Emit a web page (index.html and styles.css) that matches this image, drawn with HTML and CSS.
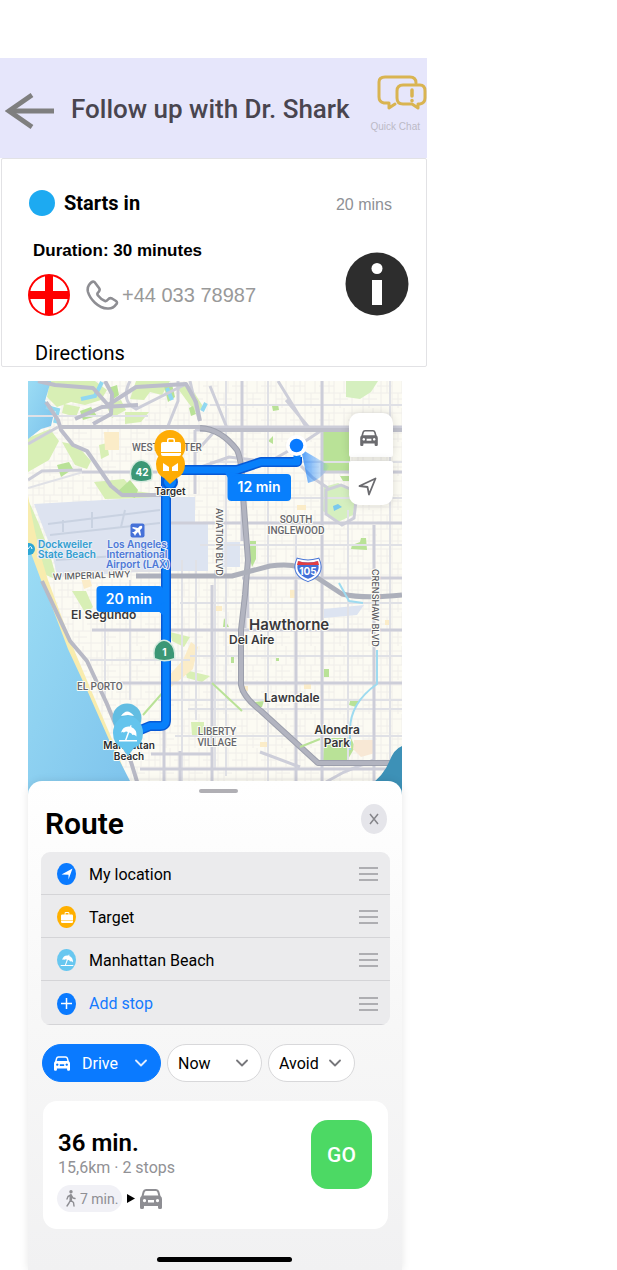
FILE: index.html
```html
<!DOCTYPE html>
<html lang="en">
<head>
<meta charset="utf-8">
<meta name="viewport" content="width=device-width, initial-scale=1">
<title>Follow up with Dr. Shark</title>
<link rel="stylesheet" href="styles.css">
</head>
<body>
<svg class="defs" aria-hidden="true">
  <symbol id="car" viewBox="0 0 22 20"><path fill-rule="evenodd" d="M6 0h10q2.600 0 3.300 2.500L20.500 7q1.500 1 1.500 3v8.500q0 1.500-1.500 1.500h-1q-1.500 0-1.500-1.500V17H4v1.500Q4 20 2.500 20h-1Q0 20 0 18.500V10q0-2 1.500-3l1.200-4.500Q3.400 0 6 0zM6.300 2Q5 2 4.600 3.200L3.700 6.500h14.600l-.9-3.300Q17 2 15.700 2zM4.500 10a1.600 1.600 0 1 0 .01 0zM17.500 10a1.600 1.600 0 1 0 .01 0zM8 11v2.500h6V11z"/></symbol>
  <symbol id="case" viewBox="0 0 20 18"><path fill-rule="evenodd" d="M6 4V2q0-2 2-2h4q2 0 2 2v2h4q2 0 2 2v8H0V6q0-2 2-2zM7.500 4h5V2.500q0-1-1-1h-3q-1 0-1 1zM0 15h20v1q0 2-2 2H2q-2 0-2-2z"/></symbol>
  <symbol id="beach" viewBox="0 0 20 18"><path d="M3 8Q5 1 12 2l.6-1.500 1 .4-.4 1.600q6 2.500 5.300 9.500-2-2.500-4-1.500-1-2.500-3.200-2.500L8.500 15.500H19V17H1v-1.500h6L9.800 7.500Q8 6.500 6 8 4.500 7 3 8z"/></symbol>
  <symbol id="chev" viewBox="0 0 12 8"><path d="M1 1.500l5 5 5-5" fill="none" stroke="currentColor" stroke-width="1.800" stroke-linecap="round" stroke-linejoin="round"/></symbol>
</svg>
<main class="screen">
  <header class="topbar">
    <button class="back" aria-label="Back"><svg width="50" height="36" viewBox="0 0 50 36" fill="none" stroke="#7f7f7f" stroke-width="4.800"><path d="M4 18h45"/><path d="M27 2L4 18l23 16"/></svg></button>
    <h1 class="topbar-title">Follow up with Dr. Shark</h1>
    <button class="chat">
      <svg width="51" height="36" viewBox="0 0 51 36" fill="none" stroke="#d9b451" stroke-width="3" stroke-linejoin="round" stroke-linecap="round"><path d="M19 29l-6 4v-5H8q-5-1-5-6V7q0-5 6-5h25q6 0 6 6"/><path d="M27 10h17q5 0 5 6v7q0 5-5 6h-2v4l-6-4h-9q-6 0-6-6v-7q0-6 6-6z"/><path d="M36 15v6M36 25.500v.2" stroke-width="3.500"/></svg>
      <span>Quick Chat</span>
    </button>
  </header>

  <section class="details">
    <div class="starts"><i class="dot"></i><strong>Starts in</strong><span class="when">20 mins</span></div>
    <div class="info-row">
      <div>
        <p class="duration">Duration: 30 minutes</p>
        <div class="contact">
          <svg width="42" height="42" viewBox="0 0 42 42" stroke="#f00" fill="none"><circle cx="21" cy="21" r="20" stroke-width="2"/><path d="M21 1v40M1 21h40" stroke-width="8"/></svg>
          <a class="phone" href="tel:+4403378987"><svg width="33" height="31" viewBox="0 0 33 31" fill="none" stroke="#8e8e93" stroke-width="2.600" stroke-linejoin="round"><path d="M3 5Q6 .5 8.500 2L13 8q1.500 2-.5 4-2 1.500-.5 3.500 3 4 7 5.500 1.500.5 3-1.500t4-1l4 2.500q2 1.500 0 3.500-3 4.500-8.500 4C12 28 4 19 2 12Q1 8 3 5z"/></svg>+44 033 78987</a>
        </div>
      </div>
      <button class="info" aria-label="Appointment information"><svg width="64" height="64" viewBox="0 0 64 64"><circle cx="32" cy="32" r="31.500" fill="#2d2d2d"/><circle cx="32" cy="16.500" r="5.500" fill="#fff"/><path d="M27 28h10v25H27z" fill="#fff"/></svg></button>
    </div>
    <h2 class="directions">Directions</h2>
  </section>

  <section class="navigator">
    <div class="map">
      <svg class="map-art" viewBox="28 381 374 420" role="img" aria-label="Route map">
        <defs>
          <pattern id="blocks" width="29" height="34" patternUnits="userSpaceOnUse"><path d="M0 5h29M0 12h15M0 19h29M15 25h14M0 31h29M4 0v34M10 5v14M15 0v34M21 19v15M25 0v19" stroke="#f0eeea" fill="none"/></pattern>
          <linearGradient id="sea" x1="0" y1="0" x2="1" y2="1"><stop stop-color="#9bdcf4"/><stop offset="1" stop-color="#7cc2ec"/></linearGradient>
          <linearGradient id="beam"><stop stop-color="#087aff" stop-opacity=".7"/><stop offset="1" stop-color="#087aff" stop-opacity="0"/></linearGradient>
        </defs>
        <path d="M28 381h374v420H28z" fill="#fcfbf3"/>
        <path d="M28 381h374v420H28z" fill="url(#blocks)"/>
        <g fill="#d8efb5">
          <path d="M50 381h45l12 9-6 10-16 5-14-3-14 5-10-10zM64 404l16 3-4 10-14-4zM28 438l22-9 9 12-10 19-21 12zM62 442l15 3 14 16-4 8-12-4zM99 445l8-2 2 12-8 4zM136 381h34l-8 14-12-3-6 8-14-1zM106 405l15-5 5 10-14 8zM125 412h24l-8 10-16 2zM94 482l30-3 10 12 25 3v4l-54 1zM176 386h14l14 22-9 4z"/>
          <path d="M28 500q10 20 17 40t12 40l-13-6-16-42zM72 591h14l7 16-7 7zM170 632l20 5-6 10-12-6zM185 670l25 6-8 6-15-4zM191 722h13v13h-12z"/>
        </g>
        <g fill="#b9e297"><path d="M80 411l11-4 6 9-14 4zM108 388l9-3 2 10-7 5zM57 465l12-3 4 7-12 8zM164 386l8-2 3 13-7 5zM130 480l8 10-3 8-18-6zM323 431h27v42h-11l-16-2zM340 476h21v5h-18zM352 545l8-3 1-4h5l1 12-16-1zM250 541h6v18l-4 8-2-8zM324 738h27l4 9-8 14h-24zM350 701l9-1-3 7-7-2zM254 702l10-1-2 6h-8zM189 408l4-2 3 8-5 2zM272 406l6-2 1 6-6 1zM268 441l5-5v8zM224 618l5 9h-6zM231 657h3v6h-3zM276 658h3v3h-3zM324 669h5v8h-5z"/></g>
        <path d="M324 487l14-4 18 8-3 24-15 7-15-11z" fill="#d5efbf"/>
        <path d="M333 506l5-2 4 3-8 4z" fill="#79c9ed"/>
        <path d="M346 381h32l-7 11-11 7-14-2z" fill="#d5efbf"/>
        <path d="M354 740h19l2 13-14 4-8-8z" fill="#f8e8d5"/>
        <path d="M165 680l18-20 8-18 7 5-5 22-22 18zM104 432h15v18h-14zM163 550h20v8h-20zM81 578l8-2 3 10-8 3z" fill="#fbecc8"/>
        <g fill="#fbecc8"><path d="M297 505h9v5h-9zM214 606h8v5h-8zM290 590h5v8h-5zM240 686h8v5h-8zM385 620h6v5h-6zM260 742h9v5h-9zM304 682h7v7h-7z"/></g>
        <path d="M34 504l121-7h15v73l-113 7-5-26z" fill="#dde3f0"/>
        <path d="M170 497h25v25h-25zM170 523h38v48h-38zM222 542h18v25h-18zM324 609l40-4-7 10-33 3z" fill="#dde4f1"/>
        <g stroke="#c9d2e1" stroke-width="2" fill="none"><path d="M48 524l112-14M50 535l110-12M56 560l105-7M63 520v12M92 512v16M125 510l-4 17"/></g>

        <path d="M28 381h23l-6 20 10 8-4 17-10 3-13 10z" fill="url(#sea)"/>
        <path d="M46 407l12 3-3 13M102 382l-7 14-14 3M167 388l5 12M206 403l-4 8" stroke="#91d8f1" stroke-width="4" fill="none"/>
        <path d="M28 495q8 48 20 85l24 65 19 45 21 49 24 62H28z" fill="#f8ecae"/>
        <path d="M28 545l13 35 10 24 17 45 19 41 23 52 20 39 10 20H28z" fill="url(#sea)"/>
        <g stroke="#e0e1e6" stroke-width="2" fill="none">
          <path d="M28 416h120M210 405h192M210 462h192M240 498h162M200 545h202M180 603h222M190 656h212M188 709h214M175 736h227M28 488l55-16h120M65 571h96M90 660h100M158 700h245M268 381v400M296 520v261M226 381v395M348 510v250M390 381v400M215 570v200M182 560v240M105 590v110M130 580v120M196 560v160"/>
        </g>
        <g stroke="#cdced9" stroke-width="3" fill="none">
          <path d="M62 427h340M195 430h207M323 472h79M161 523h241M242 578h160M92 630h310M118 683h284M140 769h262M151 754h60M242 381v160M322 381v400M374 525v256M296 580v201M212 585v196M164 700v95M180 751v30M178 381v20l-10 25M82 472h75M28 480l14-9 40-1M195 430v64M196 452l18-20M245 578v50"/>
          <path d="M286 400l25 30M278 381l30 49M210 386l17 42M190 381l9 39M130 381q-10 20 6 28l50-25M28 444l30-17M322 430l-18 12-35 20-40-5-28 10M246 518l2 100M374 760l-30 12-18 10M300 767l-40-15M328 488l-15-10-12-12M342 525l-16-11v-24l15-5 16 7-3 26z"/>
        </g>
        <g fill="none" stroke-linejoin="round">
          <path d="M46 402l12 18 3 10 12 15 14 6 24 35 11 9h45M38 381l17 4 38 3 15 17 28-18 50-3 10 18 4 19M105 381l7 13-1 20-18 10M75 419l27-12 36-2" stroke="#bcbdcb" stroke-width="4"/>
          <path d="M60 427h140M200 430h202" stroke="#bfc0cb" stroke-width="4"/>
          <path d="M200 428q21 1 37 22 5 10 6 45l5 65-3 35-4 35v55q2 12 20 26l57 52h84" stroke="#9c9fac" stroke-width="6"/>
          <path d="M200 428q21 1 37 22 5 10 6 45l5 65-3 35-4 35v55q2 12 20 26l57 52h84" stroke="#b2b4c0" stroke-width="4"/>
          <path d="M136 576h96l38-10q28-4 40 7l32 21q22 5 60 1" stroke="#adb0bb" stroke-width="5"/>
          <path d="M42 581l28 60 17 20 20 43 24 58 12 39" stroke="#b8b9c5" stroke-width="4"/>
          <path d="M377 650v34q-27 19-27 46v20M339 583l10 18 14 2" stroke="#9edbf0" stroke-width="2"/>
          <path d="M212 683l30 28M300 747l20-8M143 715l22-25" stroke="#b9e297" stroke-width="2"/>
        </g>
        <path d="M402 746q-8 3-13 16t-20 24v15h33z" fill="#3d91b7"/>

        <g class="area-label"><text x="132" y="451">WESTCHESTER</text><text x="296" y="523" text-anchor="middle">SOUTH</text><text x="296" y="534" text-anchor="middle">INGLEWOOD</text><text x="77" y="690">EL PORTO</text><text x="217" y="735" text-anchor="middle">LIBERTY</text><text x="217" y="746" text-anchor="middle">VILLAGE</text></g>
        <g class="road-label"><text x="53" y="580" transform="rotate(-2 53 580)">W IMPERIAL HWY</text><text transform="translate(216 508) rotate(90)">AVIATION BLVD</text><text transform="translate(372 569) rotate(90)">CRENSHAW BLVD</text></g>
        <g class="place-label"><text class="city" x="249" y="630">Hawthorne</text><text x="229" y="644">Del Aire</text><text x="264" y="702">Lawndale</text><text x="337" y="734" text-anchor="middle">Alondra</text><text x="337" y="747" text-anchor="middle">Park</text><text class="segundo" x="71" y="619">El Segundo</text></g>

        <g fill="none" stroke-linejoin="round"><path d="M297 457v5H261l-24 8H166V720q0 6-6 6h-10l-12 5" stroke="#0759d5" stroke-width="10"/><path d="M297 454v8H261l-24 8H166V720q0 6-6 6h-10l-12 5" stroke="#0880fb" stroke-width="7"/></g>
        <circle cx="170" cy="482" r="8" fill="#0759d5"/><circle cx="170" cy="482" r="6" fill="#0880fb"/>
        <g class="poi-label"><text class="sea-label" x="38" y="548">Dockweiler</text><text class="sea-label" x="38" y="558">State Beach</text><text x="137" y="548" text-anchor="middle">Los Angeles</text><text x="137" y="558" text-anchor="middle">International</text><text x="138" y="568" text-anchor="middle">Airport (LAX)</text></g>
        <circle cx="29" cy="549" r="6" fill="#2da6d5"/><path d="M28 549q3-5 4 0" stroke="#fff" fill="none"/>
        <path d="M301 449l29 17q-10 15-22 17z" fill="url(#beam)"/>
        <circle cx="296.500" cy="445.500" r="10.500" fill="#fff"/><circle cx="296.500" cy="445.500" r="6.800" fill="#087aff"/>
        <g fill="#087ffc"><rect x="227.500" y="474" width="63.500" height="27" rx="4"/><path d="M224 471l8 14v-8l8-3z"/><rect x="96.500" y="586" width="66.500" height="26" rx="4"/><path d="M155 608l10 9v-15z"/></g>
        <g class="time-label"><text x="259" y="492">12 min</text><text x="129" y="604">20 min</text></g>

        <g><path d="M136 463q5-4 11 0 6 5 4 16-10 4-19 0-3-10 4-16z" fill="#328c6b" stroke="#d7eadf" stroke-width="3"/><path d="M136 463q5-4 11 0 6 5 4 16-10 4-19 0-3-10 4-16z" fill="#3b9775"/><path d="M159 643q5-4 10 0 6 5 5 15-10 4-19 0-2-10 4-15z" fill="#328c6b" stroke="#d7eadf" stroke-width="3"/><path d="M159 643q5-4 10 0 6 5 5 15-10 4-19 0-2-10 4-15z" fill="#3b9775"/></g>
        <path d="M298 560q10 3 20 0 6 14-10 20-16-6-10-20z" fill="#416fd8" stroke="#4976d6" stroke-width="4"/><path d="M298 560q10 3 20 0 6 14-10 20-16-6-10-20z" fill="#416fd8" stroke="#fff" stroke-width="2"/>
        <path d="M298 561q10 3 20 0l1 4h-22z" fill="#e23e43"/>
        <g class="shield-label"><text x="142" y="476">42</text><text x="164.500" y="656">1</text><text x="308" y="575">105</text></g>
        <rect x="130.500" y="523.500" width="14" height="14" rx="2" fill="#4671d8"/><path d="M142 526q-2-1-4 2l-5-1-1 1 4 2-2 2-2 0 2 2 1 2 1-2 2-2 2 4 1-1-1-5q3-2 2-4z" fill="#fff"/>

        <g class="stop-label"><text x="170" y="495">Target</text><text x="129" y="749">Manhattan</text><text x="129" y="760">Beach</text></g>
        <path d="M156 464a14 13 0 0 1 29 0q0 10-8 14l-7 6-6-6q-8-4-8-14z" fill="#feac05"/><path d="M163 463l6 4v4h-6zM178 463l-6 4v4h6z" fill="#fff"/>
        <ellipse cx="170" cy="446" rx="15.500" ry="16" fill="#feac05"/><use href="#case" x="161" y="438" width="20" height="18" fill="#fff"/>
        <circle cx="127" cy="718" r="14.500" fill="#62bde2"/><path d="M121 716q6-9 13 0l-6-1z" fill="#fff"/>
        <path d="M113 733a15 17 0 0 1 30 0q0 12-9 15l-6 8-6-8q-9-4-9-15z" fill="#64c4ed"/><use href="#beach" x="118" y="724" width="20" height="19" fill="#fff"/>
      </svg>
      <div class="map-tools">
        <button aria-label="Driving map"><svg width="18" height="16"><use href="#car" width="18" height="16"/></svg></button>
        <button aria-label="Current location"><svg width="19" height="19" viewBox="0 0 19 19" fill="none" stroke="#6b6b6f" stroke-width="1.800" stroke-linejoin="round"><path d="M17.500 1.500L11 17.500l-1.500-7.500L1.500 9z"/></svg></button>
      </div>
    </div>

    <div class="sheet">
      <div class="grabber"></div>
      <div class="sheet-head"><h2>Route</h2><button class="close" aria-label="Close"><svg width="10" height="12" viewBox="0 0 10 12" stroke="#85858a" stroke-width="1.500"><path d="M1 1l8 10M9 1L1 11"/></svg></button></div>
      <ul class="stops">
        <li><span class="badge blue"><svg width="12" height="12" viewBox="0 0 12 12"><path d="M11.500.5L7.500 11.500V6.800L.5 6.500z"/></svg></span><span>My location</span><button class="drag" aria-label="Reorder My location"></button></li>
        <li><span class="badge orange"><svg width="12" height="11"><use href="#case" width="12" height="11"/></svg></span><span>Target</span><button class="drag" aria-label="Reorder Target"></button></li>
        <li><span class="badge sky"><svg width="14" height="13"><use href="#beach" width="14" height="13"/></svg></span><span>Manhattan Beach</span><button class="drag" aria-label="Reorder Manhattan Beach"></button></li>
        <li><span class="badge blue"><svg width="11" height="11" viewBox="0 0 11 11" stroke="#fff" stroke-width="1.500"><path d="M5.500 0v11M0 5.500h11"/></svg></span><button class="add">Add stop</button><button class="drag" aria-label="Reorder new stop"></button></li>
      </ul>
      <div class="chips">
        <label class="chip drive"><svg width="16" height="15"><use href="#car" width="16" height="15"/></svg><select aria-label="Travel mode"><option>Drive</option></select><svg width="12" height="8"><use href="#chev"/></svg></label>
        <label class="chip now"><select aria-label="Departure"><option>Now</option></select><svg width="12" height="8"><use href="#chev"/></svg></label>
        <label class="chip avoid"><select aria-label="Avoid"><option>Avoid</option></select><svg width="12" height="8"><use href="#chev"/></svg></label>
      </div>
      <article class="trip">
        <div class="trip-info">
          <h3>36 min.</h3>
          <p>15,6km · 2 stops</p>
          <div class="legs"><span class="walk"><svg width="10" height="17" viewBox="0 0 10 17" fill="none" stroke="#8e8e93" stroke-width="1.400" stroke-linecap="round" stroke-linejoin="round"><circle cx="5" cy="1.800" r="1" fill="#8e8e93"/><path d="M5 5L4.500 10l3 2.500.5 3.500M4.500 10L3 13l-2 3M1 9l1-2.500L5 5l2 3 2 .5"/><path d="M4.800 5.500v4" stroke-width="2.500"/></svg>7 min.</span><svg width="8" height="9" viewBox="0 0 8 9"><path d="M0 0l8 4.500L0 9z"/></svg><svg class="leg-car" width="22" height="20"><use href="#car" width="22" height="20"/></svg></div>
        </div>
        <button class="go">GO</button>
      </article>
      <div class="home-bar"></div>
    </div>
  </section>
</main>
</body>
</html>
```
FILE: styles.css
```css
* { box-sizing: border-box; }
body { margin: 0; background: #fff; color: #000; font-family: Roboto, sans-serif; }
button, select { font: inherit; color: inherit; border: 0; padding: 0; margin: 0; background: none; }
h1, h2, h3, p, ul { margin: 0; padding: 0; }
svg { display: block; flex: none; }
.defs { position: absolute; width: 0; height: 0; }
.screen { width: 100%; max-width: 427px; padding-top: 58px; }

.topbar { display: flex; align-items: center; height: 100px; padding-left: 5px; background: #e6e6fb; }
.back { margin-top: 6px; }
.topbar-title { flex: 1; padding: 2px 0 0 16px; font-size: 26px; font-weight: 500; line-height: 32px; color: #49454f; white-space: nowrap; }
.chat { display: flex; flex-direction: column; align-items: flex-end; align-self: flex-start; gap: 10px; padding-top: 17px; font: 10px/12px "Liberation Sans", sans-serif; color: #bcbac6; white-space: nowrap; }
.chat span { padding-right: 7px; }

.details { margin-left: 1px; padding: 30px 17px 1px 26px; border: 1px solid #e2e2e5; border-radius: 2px; }
.starts { display: flex; align-items: center; gap: 9px; height: 28px; padding-left: 1px; font-size: 20px; line-height: 28px; }
.dot { width: 26px; height: 26px; border-radius: 50%; background: #1daaf1; }
.when { margin-left: auto; padding: 4px 17px 0 0; font: 16px/20px "Liberation Sans", sans-serif; color: #8e9196; }
.info-row { display: flex; justify-content: space-between; align-items: flex-end; padding-top: 22px; }
.duration { padding-left: 5px; font: bold 17px/24px "Liberation Sans", sans-serif; }
.contact { display: flex; align-items: center; gap: 16px; padding-top: 11px; }
.phone { display: flex; align-items: center; gap: 3px; font: 20px/24px "Liberation Sans", sans-serif; color: #999; text-decoration: none; white-space: nowrap; }
.directions { padding: 25px 0 0 7px; font-size: 20px; font-weight: 400; line-height: 24px; }

.navigator { margin: 14px 25px 0 28px; }
.map { position: relative; }
.map-art { width: 100%; height: auto; font-family: Inter, sans-serif; }
.map-art text { paint-order: stroke; stroke: #fdfdf8; stroke-width: 2px; stroke-linejoin: round; }
.area-label { font-family: Roboto, sans-serif; font-size: 10px; font-weight: 500; fill: #66666b; }
.road-label { font-size: 9px; font-weight: 500; fill: #58585d; }
.place-label { font-size: 12px; font-weight: 600; fill: #38383b; }
.place-label .city { font-size: 15px; }
.poi-label { font-size: 10px; font-weight: 600; fill: #4d78d6; }
.poi-label .sea-label { fill: #329ed0; }
.map-art .poi-label text { stroke: #e6ecf6; }
.stop-label { font-size: 10px; font-weight: 600; fill: #29292c; text-anchor: middle; }
.map-art .time-label text, .map-art .shield-label text { stroke: none; fill: #fff; text-anchor: middle; }
.time-label { font-size: 14px; font-weight: 600; }
.shield-label { font-size: 10px; font-weight: 700; }
.map-tools { position: absolute; top: 32px; right: 9px; display: grid; gap: 4px; width: 44px; }
.map-tools button { display: grid; place-items: center; height: 44px; padding-top: 6px; padding-right: 5px; background: #fff; border-radius: 10px 10px 2px 2px; box-shadow: 0 0 8px #0002; fill: #6b6b6f; }
.map-tools button + button { border-radius: 2px 2px 10px 10px; padding-right: 7px; }

.sheet { position: relative; margin-top: -20px; padding: 8px 12px 8px 13px; border-radius: 14px 14px 0 0; background: linear-gradient(#fff, #f7f7f7 50%, #f1f1f2); box-shadow: 0 0 9px #0000001a; }
.grabber { width: 39px; height: 4px; margin: 0 0 0 158px; border-radius: 2px; background: #b0afb4; }
.sheet-head { display: flex; justify-content: space-between; align-items: center; height: 59px; padding: 0 3px 7px 4px; }
.sheet-head h2 { padding-top: 9px; font-size: 30px; font-weight: 600; line-height: 36px; }
.close { display: grid; place-items: center; width: 26px; height: 30px; border-radius: 50%; background: #e5e5ea; }
.stops { list-style: none; overflow: hidden; border-radius: 9px; background: #ebebed; }
.stops li { display: flex; align-items: center; gap: 13px; height: 43px; padding: 2px 12px 0 16px; font-size: 16px; border-bottom: 1px solid #d4d4d7; }
.stops li:last-child { height: 44px; }
.badge { display: grid; place-items: center; width: 19px; height: 22px; border-radius: 50%; fill: #fff; }
.blue { background: #0a7aff; }
.orange { background: #ffb000; }
.sky { background: #68c7f0; }
.add { color: #147aff; }
.drag { width: 19px; height: 14px; margin-left: auto; border: solid #aeaeb2; border-width: 2px 0; background: linear-gradient(#aeaeb2, #aeaeb2) center / 100% 2px no-repeat; }
.chips { display: flex; gap: 6px; padding: 19px 0 19px 1px; }
.chip { display: flex; align-items: center; height: 38px; padding: 0 13px 0 10px; border: 1px solid #d8d8da; border-radius: 19px; background: #fff; color: #77777b; font-size: 16px; }
.chip select { flex: 1; min-width: 0; appearance: none; color: #000; }
.drive { width: 119px; padding-left: 11px; background: #0a7aff; border-color: #0a7aff; color: #e0edff; fill: #fff; gap: 12px; }
.drive select { color: #fff; }
.now { width: 95px; }
.avoid { width: 87px; }
.trip { display: flex; justify-content: space-between; margin: 0 2px; padding: 19px 16px 17px 14px; border-radius: 14px; background: #fff; }
.trip h3 { padding: 8px 0 0 1px; font-size: 24px; font-weight: 600; line-height: 30px; }
.trip p { padding-left: 1px; font-size: 16px; line-height: 20px; color: #919195; }
.legs { display: flex; align-items: center; gap: 5px; padding-top: 7px; }
.walk { display: flex; align-items: center; gap: 4px; height: 27px; padding: 0 4px 0 9px; border-radius: 14px; background: #f1f1f6; color: #8e8e93; font-size: 14px; }
.leg-car { fill: #8e8e93; }
.go { width: 61px; height: 69px; border-radius: 17px; background: #4cd964; color: #fff; font-size: 21px; font-weight: 500; }
.home-bar { width: 135px; height: 5px; margin: 28px 0 0 116px; border-radius: 3px; background: #000; }
```
